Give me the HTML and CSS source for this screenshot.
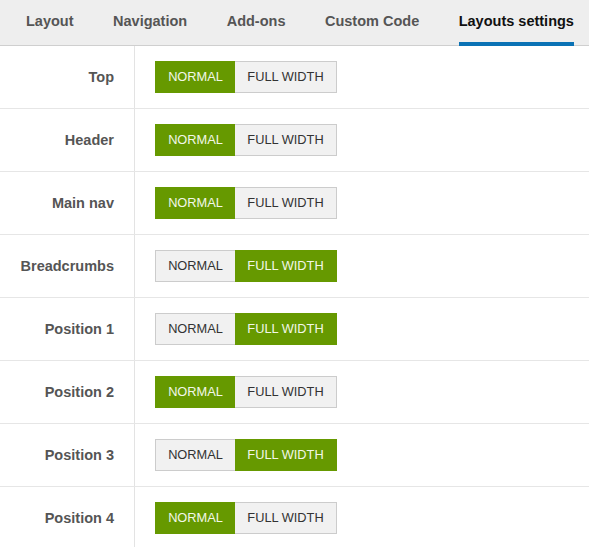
FILE: index.html
```html
<!DOCTYPE html>
<html>
<head>
<meta charset="utf-8">
<link rel="stylesheet" href="styles.css">
</head>
<body>
<nav class="tabs">
  <a class="tab">Layout</a>
  <a class="tab">Navigation</a>
  <a class="tab">Add-ons</a>
  <a class="tab">Custom Code</a>
  <a class="tab active">Layouts settings</a>
</nav>
<div class="rows">
  <div class="row"><div class="label">Top</div><div class="ctrl"><span class="btn on">NORMAL</span><span class="btn wide">FULL WIDTH</span></div></div>
  <div class="row"><div class="label">Header</div><div class="ctrl"><span class="btn on">NORMAL</span><span class="btn wide">FULL WIDTH</span></div></div>
  <div class="row"><div class="label">Main nav</div><div class="ctrl"><span class="btn on">NORMAL</span><span class="btn wide">FULL WIDTH</span></div></div>
  <div class="row"><div class="label">Breadcrumbs</div><div class="ctrl"><span class="btn">NORMAL</span><span class="btn wide on">FULL WIDTH</span></div></div>
  <div class="row"><div class="label">Position 1</div><div class="ctrl"><span class="btn">NORMAL</span><span class="btn wide on">FULL WIDTH</span></div></div>
  <div class="row"><div class="label">Position 2</div><div class="ctrl"><span class="btn on">NORMAL</span><span class="btn wide">FULL WIDTH</span></div></div>
  <div class="row"><div class="label">Position 3</div><div class="ctrl"><span class="btn">NORMAL</span><span class="btn wide on">FULL WIDTH</span></div></div>
  <div class="row"><div class="label">Position 4</div><div class="ctrl"><span class="btn on">NORMAL</span><span class="btn wide">FULL WIDTH</span></div></div>
</div>
</body>
</html>
```
FILE: styles.css
```css
html, body {
  margin: 0;
  padding: 0;
  background: #fff;
  font-family: "Liberation Sans", Arial, sans-serif;
}
.tabs {
  display: flex;
  height: 46px;
  padding-left: 26px;
  gap: 39.5px;
  background: #eeeeee;
  box-shadow: inset 0 -1px 0 #cfcfcf;
  box-sizing: border-box;
}
.tab {
  display: block;
  box-sizing: border-box;
  height: 46px;
  padding-top: 13px;
  line-height: 17px;
  font-size: 14.5px;
  font-weight: bold;
  color: #555;
  white-space: nowrap;
}
.tab.active {
  color: #111;
  border-bottom: 4px solid #0a72b5;
}
.row {
  display: flex;
  height: 63px;
  border-bottom: 1px solid #e6e6e6;
  box-sizing: border-box;
}
.label {
  width: 135px;
  box-sizing: border-box;
  padding-right: 20px;
  border-right: 1px solid #e3e3e3;
  display: flex;
  align-items: center;
  justify-content: flex-end;
  font-size: 14.5px;
  font-weight: bold;
  color: #555;
}
.ctrl {
  display: flex;
  align-items: center;
  padding-left: 20px;
}
.btn {
  box-sizing: border-box;
  width: 80px;
  height: 32px;
  line-height: 30px;
  text-align: center;
  font-size: 12.8px;
  color: #333;
  background: #f1f1f1;
  border: 1px solid #cccccc;
}
.btn.wide {
  width: 102px;
}
.btn:first-child { border-right: none; }
.btn.wide { border-left: none; }
.btn.on {
  background: #669900;
  border-color: #669900;
  color: #f2f7e8;
}
```
